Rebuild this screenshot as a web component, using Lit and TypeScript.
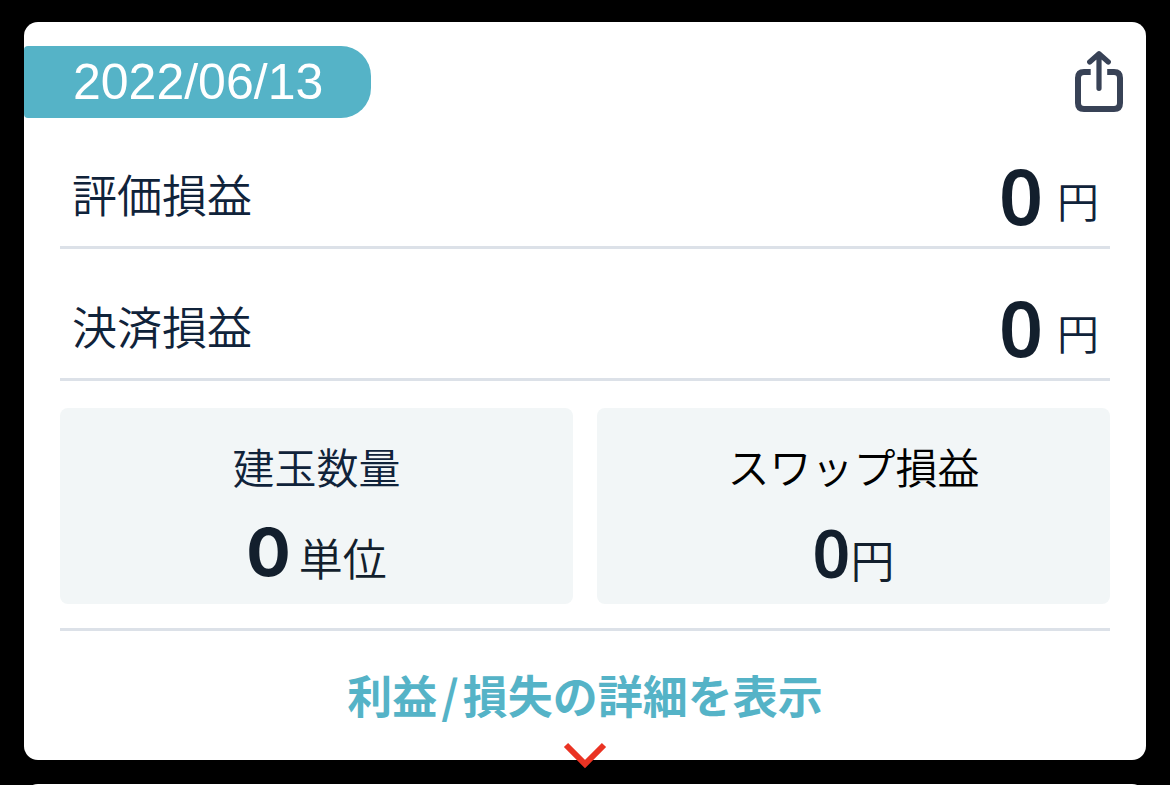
import { LitElement, html, css } from 'lit';
import { customElement } from 'lit/decorators.js';

@customElement('app-root')
export class AppRoot extends LitElement {
  static styles = css`
    :host {
      display: block;
      height: 100vh;
      box-sizing: border-box;
      padding: 22px 24px 0;
      overflow: hidden;
      background: #000;
      color: #10233a;
      font-family: 'Noto Sans CJK JP', sans-serif;
      font-weight: 350;
    }
    .card {
      background: #fff;
      border-radius: 14px;
      padding: 24px 36px 0;
    }
    .top {
      display: flex;
      justify-content: space-between;
      align-items: flex-start;
      margin: 0 -14px 0 -36px;
    }
    .date {
      padding: 0 48px 0 49px;
      border-radius: 4px 30px 30px 4px;
      background: #55b3c7;
      color: #fff;
      font-family: 'Liberation Sans', sans-serif;
      font-weight: 400;
      font-size: 50px;
      line-height: 72px;
    }
    .share {
      padding: 4px 0 0;
      border: 0;
      background: none;
      color: #384256;
      cursor: pointer;
    }
    .share svg {
      display: block;
    }
    dl,
    dd,
    dt {
      margin: 0;
    }
    .rows {
      display: grid;
      gap: 25px;
      padding-top: 24px;
    }
    .row {
      display: flex;
      justify-content: space-between;
      align-items: center;
      padding: 0 11px 0 12px;
      border-bottom: 3px solid #dce1e8;
    }
    .row dt {
      font-size: 45px;
      line-height: 104px;
    }
    .row dd {
      display: flex;
      align-items: flex-end;
      gap: 14px;
      padding-top: 4px;
      font-size: 42px;
      line-height: 56px;
    }
    .num {
      color: #131f2d;
      font-family: 'Noto Sans', sans-serif;
      font-size: 77px;
      font-weight: 600;
      line-height: 64px;
    }
    .tiles {
      display: grid;
      grid-template-columns: 1fr 1fr;
      gap: 24px;
      padding: 27px 0 24px;
      border-bottom: 3px solid #dce1e8;
    }
    .tile {
      padding: 28px 0 13px;
      border-radius: 8px;
      background: #f2f6f7;
      text-align: center;
    }
    .tile dt {
      font-size: 42px;
      line-height: 60px;
    }
    .tile .plain {
      color: #000;
    }
    .tile dd {
      display: flex;
      justify-content: center;
      align-items: baseline;
      padding-top: 24px;
      color: #131f2d;
      font-size: 44px;
      line-height: 64px;
    }
    .tile .num {
      font-size: 66px;
    }
    .tile .wide {
      margin-right: 8px;
      font-family: Inter, sans-serif;
      font-weight: 700;
    }
    .more {
      display: flex;
      flex-direction: column;
      align-items: center;
      width: 100%;
      height: 129px;
      padding: 30px 0 0;
      border: 0;
      background: none;
      color: #55b3c7;
      font: inherit;
      font-size: 45px;
      font-weight: 700;
      line-height: 68px;
      cursor: pointer;
    }
    .slash {
      margin: 0 4px;
    }
    .more svg {
      flex: none;
      margin-top: 11px;
    }
    .next {
      height: 60px;
      margin-top: 24px;
      border-radius: 14px;
      background: #fff;
    }
  `;

  render() {
    return html`
      <section class="card">
        <div class="top">
          <time class="date" datetime="2022-06-13">2022/06/13</time>
          <button class="share" aria-label="共有">
            <svg width="50" height="64" viewBox="0 0 50 64" fill="none" stroke="currentColor" stroke-width="6">
              <path d="M16.7 21.9H10Q4 21.9 4 28V53Q4 59 10 59H40Q46 59 46 53V28Q46 21.9 40 21.9H33.2" />
              <path d="M25 38.3V4.5M15.7 12L25 3.8L34.3 12" stroke-width="5.2" stroke-linecap="round" stroke-linejoin="round" />
            </svg>
          </button>
        </div>
        <dl class="rows">
          <div class="row"><dt>評価損益</dt><dd><span class="num">0</span><span>円</span></dd></div>
          <div class="row"><dt>決済損益</dt><dd><span class="num">0</span><span>円</span></dd></div>
        </dl>
        <dl class="tiles">
          <div class="tile"><dt>建玉数量</dt><dd><span class="num wide">0</span><span>単位</span></dd></div>
          <div class="tile"><dt class="plain">スワップ損益</dt><dd><span class="num">0</span><span>円</span></dd></div>
        </dl>
        <button class="more">
          <span>利益<span class="slash">/</span>損失の詳細を表示</span>
          <svg width="44" height="30" viewBox="0 0 44 30" fill="none" stroke="#ea3323" stroke-width="6">
            <path d="M3 5l19 19L41 5" />
          </svg>
        </button>
      </section>
      <section class="next"></section>
    `;
  }
}
